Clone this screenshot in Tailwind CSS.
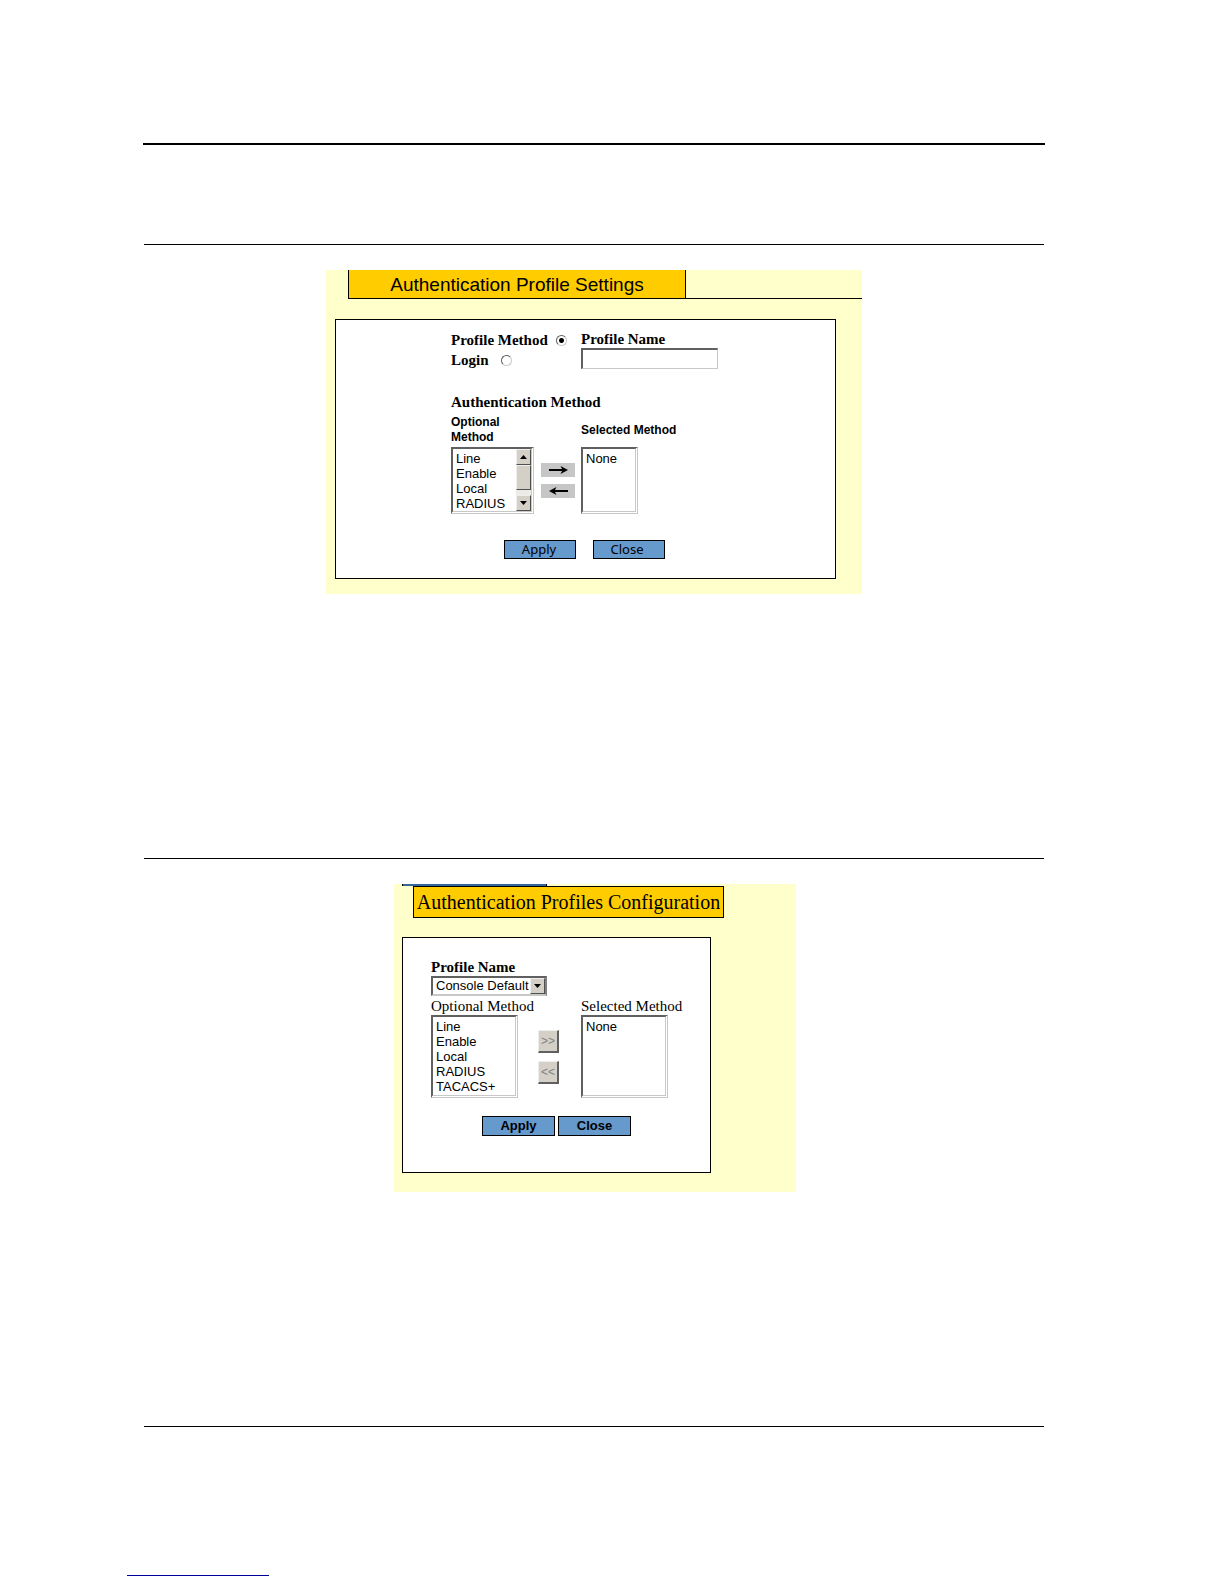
<!DOCTYPE html>
<html lang="en">
<head>
    <meta charset="UTF-8">
    <meta name="viewport" content="width=device-width, initial-scale=1.0">
    <title>Authentication Profiles</title>
    <script src="https://cdn.jsdelivr.net/npm/@tailwindcss/browser@4"></script>
</head>
<body class="bg-white text-black font-['Liberation_Sans',Arial,sans-serif]">
    <main class="pl-[143px] pr-[179px] pt-[143px]">
        <hr class="border-0 h-0.5 bg-black">

        <!-- Authentication Profile Settings -->
        <hr class="mt-[99px] border-0 h-px bg-black mx-px">
        <section class="mt-[25px]">
            <form class="mx-auto w-[536px] bg-[#ffffcc] pb-[15px]">
                <div class="flex pl-[22px]">
                    <h2 class="w-[338px] h-[29px] bg-[#ffcc00] border border-t-0 border-black text-center text-[19px] leading-[30px]">Authentication Profile Settings</h2>
                    <div class="flex-1 border-b border-black"></div>
                </div>

                <div class="mt-5 ml-[9px] mr-[26px] border border-black bg-white pl-[115px] pt-[10px] pb-[19px]">
                    <div class="grid grid-cols-[130px_137px] font-['Liberation_Serif','Times_New_Roman',serif] font-bold text-[15px]">
                        <div>
                            <div class="flex items-center h-5">
                                <label for="methodProfile">Profile Method</label>
                                <input type="radio" id="methodProfile" name="method" checked class="appearance-none ml-2 size-[11px] rounded-full border border-t-[#606060] border-l-[#606060] border-r-[#c8c8c8] border-b-[#c8c8c8] bg-white checked:bg-[radial-gradient(circle,#000_2px,#fff_3px)]">
                            </div>
                            <div class="flex items-center h-5">
                                <label for="methodLogin">Login</label>
                                <input type="radio" id="methodLogin" name="method" class="appearance-none ml-3 size-[11px] rounded-full border border-t-[#606060] border-l-[#606060] border-r-[#c8c8c8] border-b-[#c8c8c8] bg-white checked:bg-[radial-gradient(circle,#000_2px,#fff_3px)]">
                            </div>
                        </div>
                        <div>
                            <label for="profileName" class="block h-[18px] leading-[18px]">Profile Name</label>
                            <input type="text" id="profileName" class="block w-full h-[21px] px-1 bg-white border-t-2 border-l-2 border-r border-b border-t-[#606060] border-l-[#606060] border-r-[#c8c8c8] border-b-[#c8c8c8] font-normal text-[13px]">
                        </div>
                    </div>

                    <h3 class="mt-[22px] h-5 leading-5 font-['Liberation_Serif','Times_New_Roman',serif] font-bold text-[15px]">Authentication Method</h3>
                    <div class="mt-[3px] grid grid-cols-[130px_137px] items-center font-bold text-[12px] leading-[15px]">
                        <label for="optionalA">Optional<br>Method</label>
                        <label for="selectedA">Selected Method</label>
                    </div>

                    <div class="mt-0.5 flex items-center">
                        <div class="relative w-[83px] h-[67px]">
                            <select id="optionalA" size="4" class="appearance-none w-full h-full overflow-hidden bg-white text-[13px] leading-[15px] pt-0.5 border-t-2 border-l-2 border-r-3 border-b-3 [border-right-style:double] [border-bottom-style:double] border-t-[#606060] border-l-[#606060] border-r-[#c8c8c8] border-b-[#c8c8c8]">
                                <option class="p-0 pl-[3px] min-h-0 h-[15px]">Line</option>
                                <option class="p-0 pl-[3px] min-h-0 h-[15px]">Enable</option>
                                <option class="p-0 pl-[3px] min-h-0 h-[15px]">Local</option>
                                <option class="p-0 pl-[3px] min-h-0 h-[15px]">RADIUS</option>
                            </select>
                            <!-- scroll bar -->
                            <div class="absolute top-0.5 right-[3px] bottom-[3px] w-[15px] flex flex-col bg-[#ecebe6]">
                                <div class="h-4 flex items-center justify-center bg-[#d4d0c8] border border-t-[#eeeeee] border-l-[#eeeeee] border-r-[#505050] border-b-[#505050]">
                                    <svg class="w-[7px] h-1" viewBox="0 0 7 4"><path d="M3.5 0 7 4H0z"/></svg>
                                </div>
                                <div class="h-[25px] bg-[#d4d0c8] border border-t-[#eeeeee] border-l-[#eeeeee] border-r-[#505050] border-b-[#505050]"></div>
                                <div class="mt-auto h-4 flex items-center justify-center bg-[#d4d0c8] border border-t-[#eeeeee] border-l-[#eeeeee] border-r-[#505050] border-b-[#505050]">
                                    <svg class="w-[7px] h-1" viewBox="0 0 7 4"><path d="M0 0h7L3.5 4z"/></svg>
                                </div>
                            </div>
                        </div>
                        <div class="ml-[7px] flex flex-col gap-[7px]">
                            <button type="button" aria-label="Add" class="w-[34px] h-[14px] bg-[#c6c6c6] flex items-center justify-center">
                                <svg class="w-[19px] h-2" viewBox="0 0 19 8"><path d="M0 3h13L11.5 0 19 4l-7.500 4L13 5H0z"/></svg>
                            </button>
                            <button type="button" aria-label="Remove" class="w-[34px] h-[14px] bg-[#c6c6c6] flex items-center justify-center">
                                <svg class="w-[19px] h-2" viewBox="0 0 19 8"><path d="M19 3H6L7.500 0 0 4l7.500 4L6 5h13z"/></svg>
                            </button>
                        </div>
                        <select id="selectedA" size="4" class="appearance-none ml-[6px] w-[57px] h-[67px] overflow-hidden bg-white text-[13px] leading-[15px] pt-0.5 border-t-2 border-l-2 border-r-3 border-b-3 [border-right-style:double] [border-bottom-style:double] border-t-[#606060] border-l-[#606060] border-r-[#c8c8c8] border-b-[#c8c8c8]">
                            <option class="p-0 pl-[3px] min-h-0 h-[15px]">None</option>
                        </select>
                    </div>

                    <div class="mt-[26px] ml-[53px] flex gap-[17px] font-['Noto_Sans',sans-serif] text-[13px]">
                        <button type="submit" class="w-[72px] h-[19px] leading-[17px] bg-[#6699cc] border border-black pr-0.5">Apply</button>
                        <button type="button" class="w-[72px] h-[19px] leading-[17px] bg-[#6699cc] border border-black pr-1">Close</button>
                    </div>
                </div>
            </form>
        </section>

        <!-- Authentication Profiles Configuration -->
        <hr class="mt-[264px] border-0 h-px bg-black mx-px">
        <section class="mt-[25px] pl-0.5">
            <form class="mx-auto w-[402px] bg-[#ffffcc] pb-[19px]">
                <div class="ml-2 w-[145px] h-0.5 bg-[#336699] border-x border-black"></div>
                <h2 class="ml-[19px] w-[311px] h-8 bg-[#ffcc00] border border-black text-center whitespace-nowrap font-['Liberation_Serif','Times_New_Roman',serif] text-[20px] leading-[30px]">Authentication Profiles Configuration</h2>

                <div class="mt-[19px] ml-2 mr-[85px] border border-black bg-white pl-7 pt-5 pb-9">
                    <label for="profileSelect" class="block h-[18px] leading-[18px] font-['Liberation_Serif','Times_New_Roman',serif] font-bold text-[15px]">Profile Name</label>
                    <div class="relative w-[116px] h-[21px]">
                        <select id="profileSelect" class="block appearance-none w-full h-5 pl-[3px] bg-white text-[13px] leading-4 border-2 border-t-[#606060] border-l-[#606060] border-r-[#808080] border-b-[#c8c8c8]">
                            <option>Console Default</option>
                        </select>
                        <div class="absolute top-0.5 right-0.5 w-[15px] h-4 flex items-center justify-center pointer-events-none bg-[#d4d0c8] border border-t-[#eeeeee] border-l-[#eeeeee] border-r-[#505050] border-b-[#505050]">
                            <svg class="w-[7px] h-1" viewBox="0 0 7 4"><path d="M0 0h7L3.5 4z"/></svg>
                        </div>
                    </div>
                    <div class="grid grid-cols-[150px_auto] h-[18px] leading-[18px] font-['Liberation_Serif','Times_New_Roman',serif] text-[15px]">
                        <label for="optionalB">Optional Method</label>
                        <label for="selectedB">Selected Method</label>
                    </div>

                    <div class="flex items-center">
                        <select id="optionalB" size="5" class="appearance-none w-[87px] h-[83px] overflow-hidden bg-white text-[13px] leading-[15px] pt-0.5 border-t-2 border-l-2 border-r-3 border-b-3 [border-right-style:double] [border-bottom-style:double] border-t-[#606060] border-l-[#606060] border-r-[#c8c8c8] border-b-[#c8c8c8]">
                            <option class="p-0 pl-[3px] min-h-0 h-[15px]">Line</option>
                            <option class="p-0 pl-[3px] min-h-0 h-[15px]">Enable</option>
                            <option class="p-0 pl-[3px] min-h-0 h-[15px]">Local</option>
                            <option class="p-0 pl-[3px] min-h-0 h-[15px]">RADIUS</option>
                            <option class="p-0 pl-[3px] min-h-0 h-[15px]">TACACS+</option>
                        </select>
                        <div class="ml-5 flex flex-col gap-2 text-[12px] text-[#808080]">
                            <button type="button" class="w-[21px] h-[23px] leading-5 bg-[#d4d0c8] border-t border-l border-r-2 border-b-2 border-t-[#eeeeee] border-l-[#eeeeee] border-r-[#606060] border-b-[#606060]">&gt;&gt;</button>
                            <button type="button" class="w-[21px] h-[23px] leading-5 bg-[#d4d0c8] border-t border-l border-r-2 border-b-2 border-t-[#eeeeee] border-l-[#eeeeee] border-r-[#606060] border-b-[#606060]">&lt;&lt;</button>
                        </div>
                        <select id="selectedB" size="5" class="appearance-none ml-[22px] w-[87px] h-[83px] overflow-hidden bg-white text-[13px] leading-[15px] pt-0.5 border-t-2 border-l-2 border-r-3 border-b-3 [border-right-style:double] [border-bottom-style:double] border-t-[#606060] border-l-[#606060] border-r-[#c8c8c8] border-b-[#c8c8c8]">
                            <option class="p-0 pl-[3px] min-h-0 h-[15px]">None</option>
                        </select>
                    </div>

                    <div class="mt-[18px] ml-[51px] flex gap-[3px] font-bold text-[13px]">
                        <button type="submit" class="w-[73px] h-5 leading-[18px] bg-[#6699cc] border border-black">Apply</button>
                        <button type="button" class="w-[73px] h-5 leading-[18px] bg-[#6699cc] border border-black">Close</button>
                    </div>
                </div>
            </form>
        </section>

        <hr class="mt-[234px] border-0 h-px bg-black mx-px">
    </main>

    <footer class="pt-[148px] pb-2 pl-[127px]">
        <a href="#" aria-label="Home" class="block w-[142px] h-px bg-[#000099]"></a>
    </footer>
</body>
</html>
